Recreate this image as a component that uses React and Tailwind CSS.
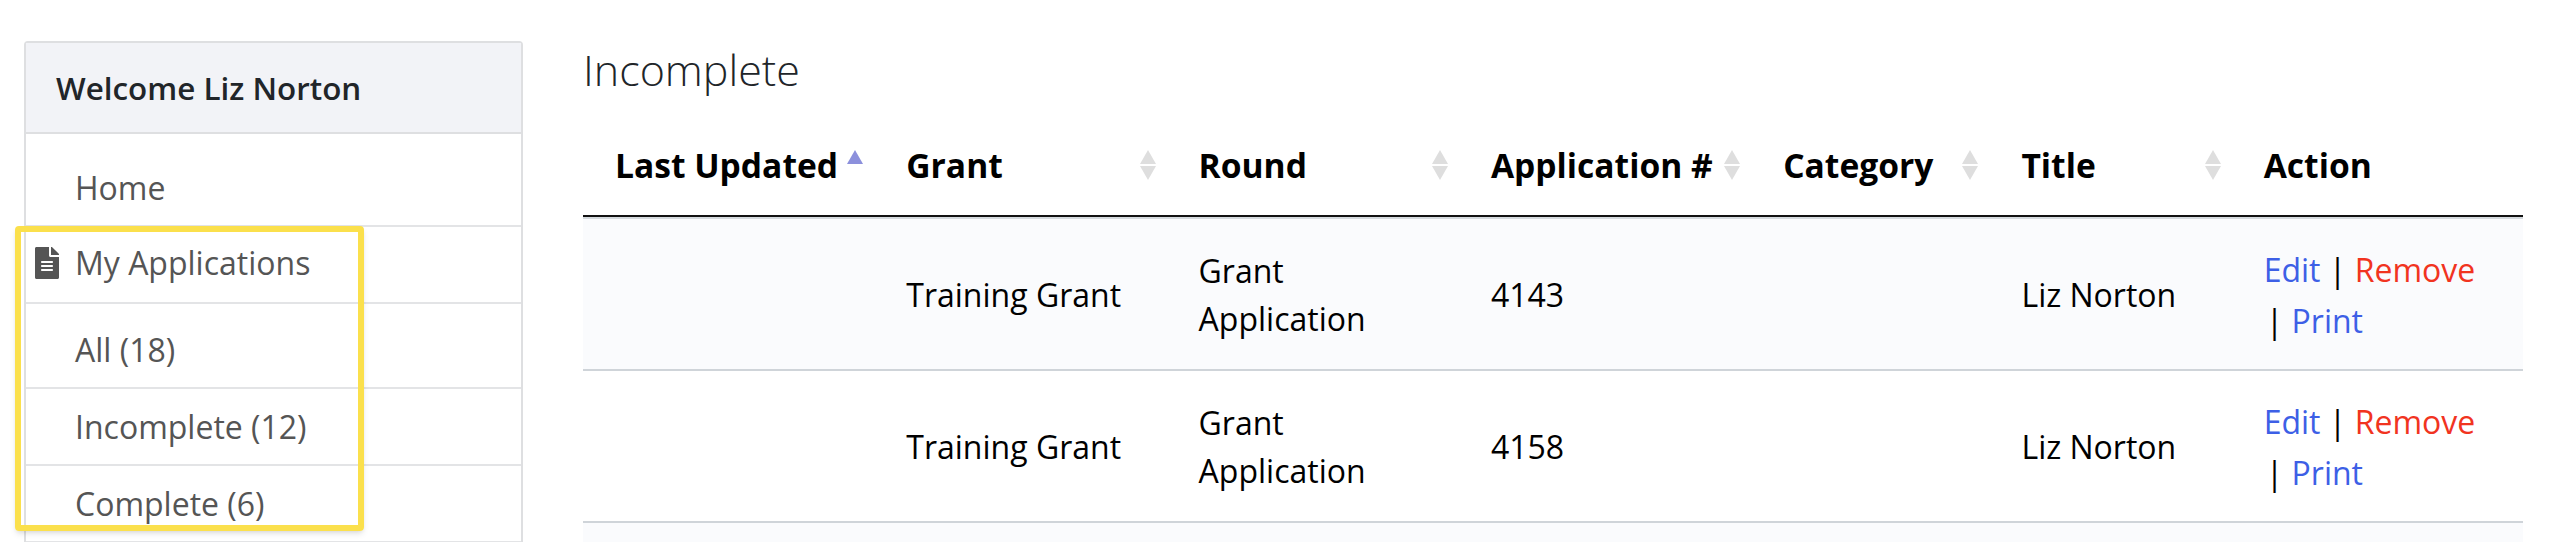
import { FaFileAlt } from 'react-icons/fa'

const NAV_ROWS = [
  { label: 'Home', height: 'h-[93px]', shift: 'pt-[16px]' },
  { label: 'My Applications', height: 'h-[77px]', shift: 'pb-[4px]', icon: true },
  { label: 'All (18)', height: 'h-[85px]', shift: 'pt-[8px]' },
  { label: 'Incomplete (12)', height: 'h-[77px]' },
  { label: 'Complete (6)', height: 'h-[77px]' },
]

const COLUMNS = [
  { label: 'Last Updated', width: 'w-[291px]', sort: 'asc' },
  { label: 'Grant', width: 'w-[292px]', sort: 'none' },
  { label: 'Round', width: 'w-[292px]', sort: 'none' },
  { label: 'Application #', width: 'w-[292px]', sort: 'none' },
  { label: 'Category', width: 'w-[238px]', sort: 'none' },
  { label: 'Title', width: 'w-[242px]', sort: 'none' },
  { label: 'Action', width: 'w-[291px]' },
]

const APPLICATIONS = [
  { id: 4143, first: true },
  { id: 4158 },
]

function SortIcon({ sort }) {
  if (!sort) return null
  return (
    <svg width="16" height="30" viewBox="0 0 16 30" className="shrink-0">
      <path d="M8 0 L16 14 L0 14 Z" fill={sort === 'asc' ? '#8c90dc' : '#dedede'} />
      {sort === 'none' && <path d="M0 16 L16 16 L8 30 Z" fill="#dedede" />}
    </svg>
  )
}

function Sidebar() {
  return (
    <aside className="relative mt-[41px] ml-[24px] h-[520px] w-[499px] shrink-0 rounded-t border-2 border-[#dedfe1] bg-white">
      <div className="flex h-[91px] items-center border-b-2 border-[#dedfe1] bg-[#f2f3f7] pl-[30px] text-[31.4px] font-semibold text-[#212529]">
        Welcome Liz Norton
      </div>
      {NAV_ROWS.map((row) => (
        <div
          key={row.label}
          className={`flex items-center border-b-2 border-[#e3e4e6] pl-[49px] text-[#555] ${row.height} ${row.shift || ''}`}
        >
          {row.icon && <FaFileAlt className="absolute left-[5px] text-[32px] text-[#555]" />}
          {row.label}
        </div>
      ))}
    </aside>
  )
}

function ApplicationRow({ app }) {
  const cell = `border-b-2 border-[#cfd4d9] px-[32px] ${app.first ? 'border-t-2 border-t-[#d5dade] bg-[#fafbfd]' : 'bg-white'}`
  return (
    <tr>
      <td className={cell} />
      <td className={`${cell} pt-[2px]`}>Training Grant</td>
      <td className={`${cell} pt-[2px] leading-[48px]`}>Grant Application</td>
      <td className={`${cell} pt-[2px]`}>{app.id}</td>
      <td className={cell} />
      <td className={`${cell} pt-[2px]`}>Liz Norton</td>
      <td className={`${cell} pt-[25px] pb-[23px] leading-[51px]`}>
        <div>
          <a className="text-[#3d5fe6]">Edit</a> | <a className="text-[#f1341f]">Remove</a>
        </div>
        <div className="pl-[2px]">
          | <a className="text-[#3d5fe6]">Print</a>
        </div>
      </td>
    </tr>
  )
}

export default function App() {
  return (
    <div className="flex h-[542px] w-[2568px] overflow-hidden bg-white font-['Open_Sans',sans-serif] text-[32px] text-black">
      <Sidebar />
      <main className="ml-[60px] w-[1940px]">
        <h1 className="mt-[40px] h-[60px] text-[43px] leading-[60px] font-light text-[#212529]">Incomplete</h1>
        <table className="mt-[15px] w-full table-fixed border-separate border-spacing-0">
          <colgroup>
            {COLUMNS.map((col) => (
              <col key={col.label} className={col.width} />
            ))}
          </colgroup>
          <thead>
            <tr>
              {COLUMNS.map((col) => (
                <th key={col.label} className="h-[102px] border-b-[2px] border-[#111] pr-[11px] pl-[32px] text-left text-[33.6px] font-bold">
                  <div className="flex items-center justify-between whitespace-nowrap">
                    <span className="pt-[1px]">{col.label}</span>
                    <SortIcon sort={col.sort} />
                  </div>
                </th>
              ))}
            </tr>
          </thead>
          <tbody>
            {APPLICATIONS.map((app) => (
              <ApplicationRow key={app.id} app={app} />
            ))}
            <tr className="h-[100px] bg-[#fafbfd]">
              <td colSpan={7} />
            </tr>
          </tbody>
        </table>
      </main>
      {/* call-out drawn over the sidebar */}
      <div className="absolute top-[226px] left-[15px] h-[305px] w-[349px] rounded border-[6px] border-[#fbe04c] shadow-md" />
    </div>
  )
}
